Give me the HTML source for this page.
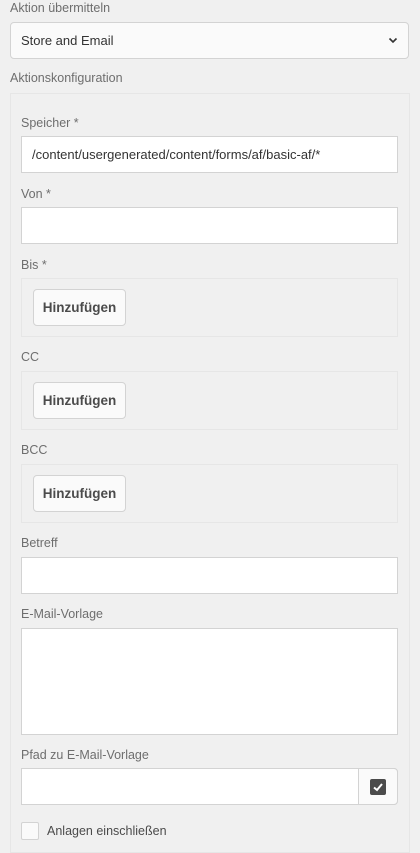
<!DOCTYPE html>
<html><head><meta charset="utf-8"><style>
*{box-sizing:border-box;margin:0;padding:0}
body{width:420px;height:841px;background:#f0f0f0;font-family:"Liberation Sans",sans-serif;font-size:12.5px;color:#6e6e6e;position:relative;overflow:hidden}
.a{position:absolute}
.lbl{position:absolute;left:21px;color:#6e6e6e;font-size:12.5px}
.inp{position:absolute;left:21px;width:377px;height:37px;background:#fff;border:1px solid #d3d3d3}
.box{position:absolute;left:21px;width:377px;height:59px;border:1px solid #e6e6e6;background:#f0f0f0}
.btn{position:absolute;left:11px;top:10px;width:93px;height:37px;background:#fafafa;border:1px solid #d3d3d3;border-radius:4px;font-weight:bold;color:#4b4b4b;font-size:13.5px;text-align:center;line-height:35px}
</style></head><body>
<div class="a" style="left:10px;top:1px;color:#6e6e6e">Aktion übermitteln</div>
<div class="a" style="left:10px;top:22px;width:399px;height:37px;background:#fafafa;border:1px solid #d3d3d3;border-radius:4px;color:#333;line-height:35px;padding-left:10px;font-size:13px">Store and Email
<svg class="a" style="right:10px;top:14px" width="10" height="7" viewBox="0 0 10 7"><path d="M1.5 1.5L5 5L8.5 1.5" fill="none" stroke="#333" stroke-width="1.6"/></svg></div>
<div class="a" style="left:10px;top:71px">Aktionskonfiguration</div>
<div class="a" style="left:10px;top:93px;width:400px;height:760px;border:1px solid #e6e6e6"></div>
<div class="lbl" style="top:116px">Speicher *</div>
<div class="inp" style="top:136px;color:#333;line-height:35px;padding-left:10px;font-size:13px">/content/usergenerated/content/forms/af/basic-af/*</div>
<div class="lbl" style="top:187px">Von *</div>
<div class="inp" style="top:207px"></div>
<div class="lbl" style="top:258px">Bis *</div>
<div class="box" style="top:278px"><div class="btn">Hinzufügen</div></div>
<div class="lbl" style="top:350px">CC</div>
<div class="box" style="top:371px"><div class="btn">Hinzufügen</div></div>
<div class="lbl" style="top:443px">BCC</div>
<div class="box" style="top:464px"><div class="btn">Hinzufügen</div></div>
<div class="lbl" style="top:536px">Betreff</div>
<div class="inp" style="top:557px"></div>
<div class="lbl" style="top:607px">E-Mail-Vorlage</div>
<div class="inp" style="top:628px;height:107px"></div>
<div class="lbl" style="top:748px">Pfad zu E-Mail-Vorlage</div>
<div class="inp" style="top:768px;border-radius:0 4px 4px 0"></div>
<div class="a" style="left:358px;top:768px;width:40px;height:37px;background:#fafafa;border:1px solid #d3d3d3;border-radius:0 4px 4px 0">
<svg class="a" style="left:11px;top:10px" width="16" height="16" viewBox="0 0 16 16"><rect width="16" height="16" rx="2" fill="#4b4b4b"/><path d="M4 8.5L7 11L12 5" fill="none" stroke="#fff" stroke-width="2"/></svg></div>
<div class="a" style="left:21px;top:822px;width:18px;height:18px;background:#fafafa;border:1px solid #d3d3d3;border-radius:2px"></div>
<div class="a" style="left:47px;top:824px;color:#4b4b4b">Anlagen einschließen</div>
</body></html>
